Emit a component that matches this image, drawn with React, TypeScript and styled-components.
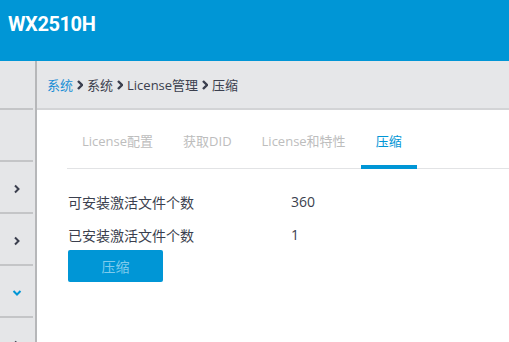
import React from 'react';
import styled, { createGlobalStyle } from 'styled-components';

const GlobalStyle = createGlobalStyle`
  html, body {
    margin: 0;
    padding: 0;
    background: #ffffff;
    overflow: hidden;
  }
  body {
    font-family: "Open Sans", "Noto Sans CJK SC", sans-serif;
  }
`;

const tabs = ['License配置', '获取DID', 'License和特性', '压缩'];
const activeTab = 3;

type Dir = 'none' | 'right' | 'down';
const sideItems: Dir[] = ['none', 'none', 'right', 'right', 'down', 'right'];

const Chevron = ({ dir, color }: { dir: 'right' | 'down'; color: string }) => (
  <svg width="10" height="10" viewBox="0 0 10 10">
    <path
      d={dir === 'right' ? 'M3 1.5 L6.5 5 L3 8.5' : 'M1.5 3 L5 6.5 L8.5 3'}
      fill="none"
      stroke={color}
      strokeWidth="2"
    />
  </svg>
);

const CrumbArrow = () => (
  <svg width="6" height="10" viewBox="0 0 6 10">
    <path d="M1 1 L5 5 L1 9" fill="none" stroke="#3b3f4e" strokeWidth="2.4" />
  </svg>
);

export default function App() {
  return (
    <Page>
      <GlobalStyle />
      <Header>WX2510H</Header>
      <Body>
        <Sidebar>
          {sideItems.map((d, i) => (
            <SideItem key={i}>
              {d !== 'none' && (
                <Chevron dir={d} color={d === 'down' ? '#0096d6' : '#3b3f4e'} />
              )}
            </SideItem>
          ))}
        </Sidebar>
        <Main>
          <Breadcrumb>
            <CrumbLink>系统</CrumbLink>
            <CrumbArrow />
            <span>系统</span>
            <CrumbArrow />
            <span>License管理</span>
            <CrumbArrow />
            <span>压缩</span>
          </Breadcrumb>
          <Content>
            <TabBar>
              {tabs.map((t, i) => (
                <Tab key={t} $active={i === activeTab}>
                  {t}
                </Tab>
              ))}
            </TabBar>
            <Form>
              <Row>
                <Label>可安装激活文件个数</Label>
                <Value>360</Value>
              </Row>
              <Row>
                <Label>已安装激活文件个数</Label>
                <Value>1</Value>
              </Row>
              <PrimaryButton>压缩</PrimaryButton>
            </Form>
          </Content>
        </Main>
      </Body>
    </Page>
  );
}

const Page = styled.div`
  width: 509px;
  height: 342px;
  display: flex;
  flex-direction: column;
  overflow: hidden;
`;

const Header = styled.div`
  height: 61px;
  flex-shrink: 0;
  background: #0096d6;
  color: #ffffff;
  font-family: "Roboto", "Liberation Sans", sans-serif;
  font-weight: bold;
  font-size: 20px;
  letter-spacing: -0.4px;
  padding: 12px 0 0 8px;
  box-sizing: border-box;
  line-height: 24px;
`;

const Body = styled.div`
  flex: 1;
  display: flex;
  min-height: 0;
`;

const Sidebar = styled.div`
  width: 35px;
  flex-shrink: 0;
  background: #e5e6e8;
  border-right: 2px solid #b6b7b9;
  display: flex;
  flex-direction: column;
`;

const SideItem = styled.div`
  width: 33px;
  height: 52px;
  flex-shrink: 0;
  box-sizing: border-box;
  border-bottom: 2px solid #c4c5c7;
  display: flex;
  align-items: center;
  justify-content: center;
  padding-top: 4px;

  &:first-child {
    height: 49px;
    padding-top: 0;
  }
`;

const Main = styled.div`
  flex: 1;
  display: flex;
  flex-direction: column;
  min-width: 0;
`;

const Breadcrumb = styled.div`
  height: 49px;
  flex-shrink: 0;
  box-sizing: border-box;
  background: #e6e7e9;
  border-bottom: 2px solid #d3d4d6;
  display: flex;
  align-items: center;
  gap: 4px;
  padding-left: 10px;
  font-size: 13px;
  color: #3b3f4e;
`;

const CrumbLink = styled.span`
  color: #1a8fd6;
`;

const Content = styled.div`
  flex: 1;
  padding-left: 30px;
`;

const TabBar = styled.div`
  display: flex;
  border-bottom: 1px solid #e2e3e5;
`;

const Tab = styled.div<{ $active: boolean }>`
  padding: 20px 15px 13px;
  line-height: 22px;
  font-size: 13px;
  color: ${(p) => (p.$active ? '#0096d6' : '#bdbdbd')};
  border-bottom: 4px solid ${(p) => (p.$active ? '#0096d6' : 'transparent')};
  margin-bottom: -1px;
  white-space: nowrap;
`;

const Form = styled.div`
  padding: 16px 0 0 1px;
  display: flex;
  flex-direction: column;
`;

const Row = styled.div`
  display: flex;
  height: 33px;
  align-items: center;
  font-size: 14px;
  color: #3b3f4e;
`;

const Label = styled.div`
  width: 223px;
`;

const Value = styled.div``;

const PrimaryButton = styled.button`
  margin-top: -1px;
  width: 95px;
  height: 32px;
  border: none;
  border-radius: 2px;
  background: #0096d6;
  color: #7fcbec;
  font-family: "Open Sans", "Noto Sans CJK SC", sans-serif;
  font-size: 14px;
  padding: 0;
`;
